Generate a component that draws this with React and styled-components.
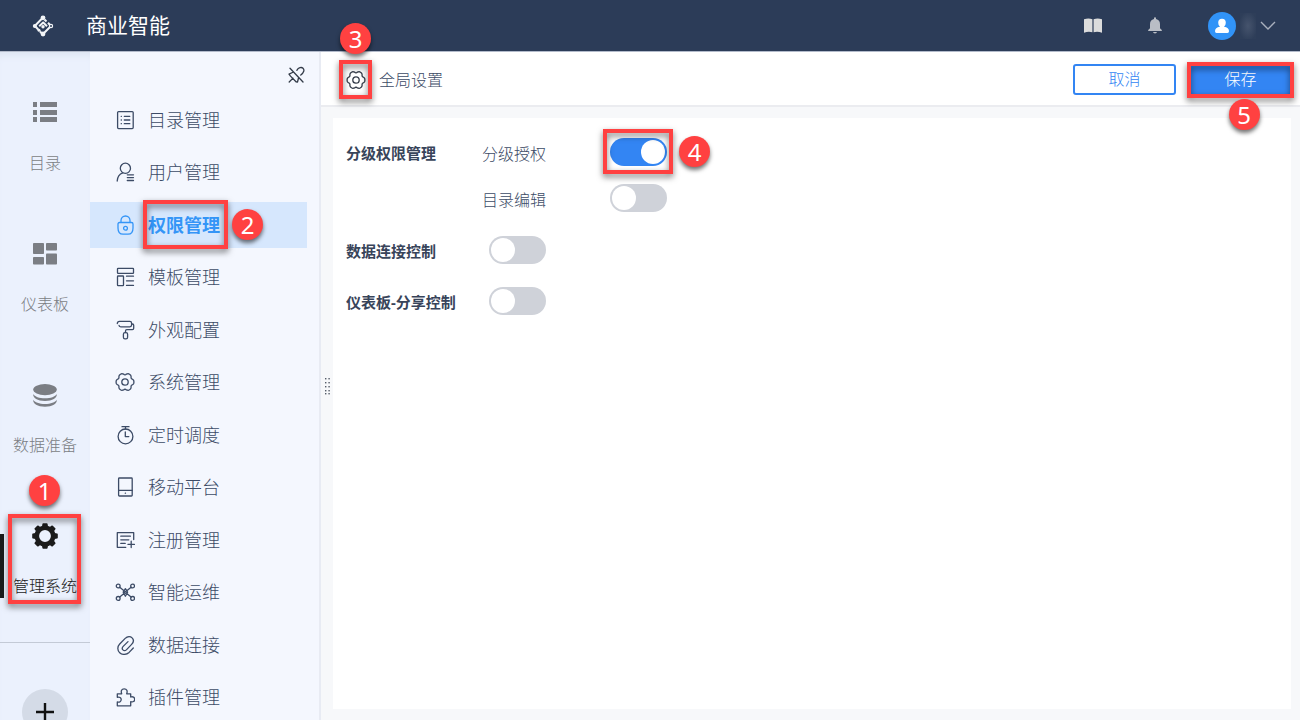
import React, { useState } from 'react'
import styled, { createGlobalStyle, css } from 'styled-components'

const GlobalStyle = createGlobalStyle`
    *, *::before, *::after {
        box-sizing: border-box;
    }
    body {
        margin: 0;
        color: #3c4b66;
        font-family: "Noto Sans", "Noto Sans CJK SC", sans-serif;
        font-size: 16px;
        font-weight: 300;
        line-height: 24px;
    }
    button, input {
        font: inherit;
    }
    a {
        color: inherit;
        text-decoration: none;
    }
`

const Page = styled.div`
    display: flex;
    flex-direction: column;
    height: 100vh;
    overflow: hidden;
`
const Header = styled.header`
    display: flex;
    align-items: center;
    flex-shrink: 0;
    gap: 32px;
    height: 52px;
    padding: 0 24px 0 32px;
    background: #2c3c58;
    border-bottom: 1px solid #b3bbcb;
`
const Title = styled.h1`
    margin: 0;
    padding-bottom: 2px;
    color: #fff;
    font-size: 21px;
    font-weight: 400;
    line-height: 28px;
`
const HeaderTools = styled.div`
    display: flex;
    align-items: center;
    gap: 44px;
    margin-left: auto;
`
const IconButton = styled.button`
    display: flex;
    align-items: center;
    gap: 4px;
    padding: 0;
    border: 0;
    background: none;
    color: ${props => props.$color || '#333b48'};
    cursor: pointer;
`
const Avatar = styled.span`
    display: flex;
    align-items: center;
    justify-content: center;
    width: 28px;
    height: 28px;
    border-radius: 50%;
    background: #3193f7;
    color: #fff;
`
const HiddenName = styled.span`
    width: 16px;
    height: 26px;
    background: radial-gradient(#46546d, #2e3e59 80%);
`
const Body = styled.div`
    display: flex;
    flex: 1;
    min-height: 0;
`

const Rail = styled.nav`
    display: flex;
    flex-direction: column;
    flex: 0 0 90px;
    padding-top: 47px;
    background: #ebf1fd;
    box-shadow: inset 0 8px 8px -6px #d9e1ef;
`
const RailList = styled.div`
    display: flex;
    flex-direction: column;
    gap: 65px;
`
const RailLink = styled.a`
    position: relative;
    display: flex;
    flex-direction: column;
    align-items: center;
    gap: 24px;
    color: ${props => (props.$active ? '#1b1b1b' : '#7b7e84')};
    ${props => props.$active && css`
        &::before {
            content: "";
            position: absolute;
            left: 0;
            bottom: 0;
            width: 4px;
            height: 64px;
            background: #1b1b1b;
        }
    `}
`
const RailLine = styled.hr`
    width: 100%;
    margin: 44px 0 46px;
    border: 0;
    border-top: 1px solid #c3cad6;
`
const AddButton = styled.button`
    display: flex;
    align-items: center;
    justify-content: center;
    align-self: center;
    flex-shrink: 0;
    width: 46px;
    height: 46px;
    padding: 0;
    border: 0;
    border-radius: 50%;
    background: #d4dbe7;
    color: #111;
`

const Side = styled.aside`
    display: flex;
    flex-direction: column;
    flex: 0 0 231px;
    background: #f4f7fe;
    border-right: 2px solid #e8ebf3;
`
const SideTop = styled.div`
    display: flex;
    align-items: center;
    justify-content: flex-end;
    height: 45px;
    padding-right: 14px;
`
const Menu = styled.nav`
    display: flex;
    flex-direction: column;
    justify-content: space-between;
    flex: 1;
    padding-right: 12px;
`
const MenuLink = styled.a`
    display: flex;
    align-items: center;
    gap: 13px;
    height: 46px;
    padding-left: 25px;
    color: ${props => (props.$active ? '#3495f7' : '#3c4b66')};
    background: ${props => (props.$active ? '#d6e7fd' : 'none')};
    font-size: 18px;
    font-weight: ${props => (props.$active ? 700 : 300)};
`

const Main = styled.main`
    position: relative;
    display: flex;
    flex-direction: column;
    flex: 1;
    min-width: 0;
    background: #f7f8fa;
`
const Toolbar = styled.div`
    display: flex;
    align-items: center;
    gap: 13px;
    height: 55px;
    padding: 2px 8px 0 25px;
    background: #fff;
    border-bottom: 2px solid #ebecf0;
`
const ToolbarTitle = styled.h2`
    margin: 0 auto 0 0;
    font-size: 16px;
    font-weight: 300;
`
const Button = styled.button`
    width: 103px;
    height: 31px;
    padding: 0 0 2px;
    border: 2px solid #3385f3;
    border-radius: 3px;
    background: ${props => (props.$primary ? '#3385f3' : '#fff')};
    color: ${props => (props.$primary ? '#fff' : '#3385f3')};
    cursor: pointer;
`
const Grip = styled.svg`
    position: absolute;
    top: 50%;
    left: 3px;
    margin-top: -9px;
`
const Workspace = styled.div`
    display: flex;
    flex: 1;
    padding: 11px 9px 11px 12px;
`
const Card = styled.section`
    display: flex;
    flex-direction: column;
    flex: 1;
    gap: 23px;
    padding: 20px 13px;
    background: #fff;
`
const Setting = styled.div`
    display: flex;
`
const SettingName = styled.div`
    flex: 0 0 ${props => (props.$wide ? 143 : 136)}px;
    padding-top: 3px;
    color: #38445a;
    font-size: 15px;
    font-weight: 700;
`
const Options = styled.div`
    display: flex;
    flex-direction: column;
    gap: 18px;
    padding-bottom: 1px;
`
const Option = styled.div`
    display: flex;
`
const OptionName = styled.label`
    width: 128px;
    padding-top: 4px;
`
const Toggle = styled.input`
    display: block;
    width: 57px;
    height: 28px;
    margin: 0;
    padding: 2px;
    appearance: none;
    border-radius: 14px;
    background: ${props => (props.checked ? '#3385f3' : '#cfd2d9')};
    cursor: pointer;
    &::before {
        content: "";
        display: block;
        width: 24px;
        height: 24px;
        margin-left: ${props => (props.checked ? '29px' : '0')};
        border-radius: 50%;
        background: #fff;
    }
`

// numbered guide marks that lie over the controls
const Anchor = styled.span`
    position: relative;
    display: block;
`
const Frame = styled.span`
    position: absolute;
    inset: ${props => props.$inset};
    border: 4px solid #ff4141;
    filter: drop-shadow(0 3px 3px rgba(0, 0, 0, 0.55));
    pointer-events: none;
`
const Badge = styled.span`
    position: absolute;
    ${props => props.$place}
    z-index: 1;
    width: 31px;
    height: 31px;
    border-radius: 50%;
    background: #ff4141;
    box-shadow: 0 3px 4px rgba(0, 0, 0, 0.55);
    color: #fff;
    font-size: 24px;
    font-weight: 400;
    line-height: 31px;
    text-align: center;
    pointer-events: none;
`
const above = css`
    left: 50%;
    bottom: 100%;
    margin: 0 0 16px -16px;
`
const below = css`
    left: 50%;
    top: 100%;
    margin: 4px 0 0 -12px;
`
const right = css`
    left: 100%;
    top: 50%;
    margin: -16px 0 0 12px;
`

const gearPath = () => {
    const points = []
    for (let i = 0; i < 72; i++) {
        const a = (i * Math.PI) / 36
        const r = 8.9 - 1.7 * Math.pow((1 - Math.cos(6 * a)) / 2, 2)
        points.push(`${(10 + r * Math.cos(a)).toFixed(2)} ${(10 + r * Math.sin(a)).toFixed(2)}`)
    }
    return `M${points.join('L')}Z`
}

const Line = ({ children, size = 20 }) => (
    <svg width={size} height={size} viewBox={`0 0 ${size} ${size}`} fill="none" stroke="currentColor"
        strokeWidth="1.3" strokeLinecap="round" strokeLinejoin="round" aria-hidden="true">
        {children}
    </svg>
)

const Gear = () => (
    <Line>
        <path d={gearPath()} />
        <circle cx="10" cy="10" r="3.2" />
    </Line>
)

const menuItems = [
    {
        name: '目录管理',
        icon: <Line><rect x="2.6" y="1.6" width="15.6" height="17" rx="1" /><path d="M6.2 6.3h.2M6.2 10h.2M6.2 13.7h.2M9.3 6.3h5.5M9.3 10h5.5M9.3 13.7h5.5" /></Line>
    },
    {
        name: '用户管理',
        icon: <Line><circle cx="10.4" cy="6.3" r="5.1" /><path d="M2.2 19c.2-4 2.2-7 5.6-8.2M12.3 12.8h6.2M12.3 15.6h6.2M12.3 18.5h6.2" /></Line>
    },
    {
        name: '权限管理',
        icon: <Line><path d="M6 7.5V5.5a4.5 4.5 0 0 1 9 0v2M4.5 7.5h12q1.500 0 1.500 1.500v4c0 4.300-2 6.200-5 6.200H8c-3 0-5-1.900-5-6.200V9q0-1.500 1.500-1.500z" /><circle cx="10.5" cy="13.2" r="1.9" /></Line>
    },
    {
        name: '模板管理',
        icon: <Line><rect x="2.5" y="1.3" width="16" height="5" rx=".6" /><rect x="2.5" y="9" width="6" height="9.6" rx=".6" /><path d="M11.5 9.2h7M11.5 13.8h7M11.5 18.4h7" /></Line>
    },
    {
        name: '外观配置',
        icon: <Line><path d="M2.3 3.6Q2.3 1.4 4.5 1.4h10.3q1.8 0 1.8 1.8V5q0 1.800-1.800 1.800h-9Q4 6.800 4 5.300M16.600 4h.8q1.300 0 1.300 1.300v3q0 1.300-1.300 1.300h-5.600q-1.300 0-1.300 1.300v1.600" /><rect x="8.4" y="12.6" width="4.2" height="6.2" rx="1.6" /></Line>
    },
    { name: '系统管理', icon: <Gear /> },
    {
        name: '定时调度',
        icon: <Line><circle cx="10.5" cy="11.4" r="7.4" /><path d="M7 1.7h7M10.5 1.700v2.200M10.300 7v4.600h3.500" /></Line>
    },
    {
        name: '移动平台',
        icon: <Line><rect x="3.6" y="1" width="13.6" height="18" rx=".8" /><path d="M3.6 13.3h13.600M10.300 16.200h.2" /></Line>
    },
    {
        name: '注册管理',
        icon: <Line><path d="M18.7 9.5V2.7H2.3v14.600h8.500M5.800 6.200h9.600M5.800 9.800h8M5.800 13.400h4.400M16.200 11.200v6.400M13 14.400h6.400" /></Line>
    },
    {
        name: '智能运维',
        icon: <Line><circle cx="3.2" cy="4" r="1.9" /><circle cx="17.6" cy="4" r="1.9" /><circle cx="3.2" cy="16.4" r="1.9" /><circle cx="17.6" cy="16.4" r="1.9" /><path d="M4.7 5.3l4 3.300M16.100 5.300l-4 3.300M4.700 15.100l4-3.300M16.100 15.100l-4-3.300M10.400 6.700l2.200 3.500-2.200 4-2.200-4z" /><circle cx="10.4" cy="10.3" r="1" /></Line>
    },
    {
        name: '数据连接',
        icon: <Line><path d="M18.3 13l-4.200 4.400c-3 2.600-7 2.600-9.400.3s-2.600-6 0-8.700l5.500-5.600c2.300-2.200 5.200-2.200 6.900-.5s1.600 4.300-.5 6.500l-5 5.200c-1.200 1.200-2.800 1.200-3.700.3s-.8-2.300.3-3.500l4.800-4.800" /></Line>
    },
    {
        name: '插件管理',
        icon: <Line><path d="M2.3 6.8h4.400c-1-2.500-.2-5 2.500-5s3.500 2.500 2.500 5h4V10c2.200-.8 4 .3 4 2.300s-1.800 3.100-4 2.300v4.200H2.300v-3.900c2.300.8 3.900-.5 3.900-2.300S4.600 9.500 2.300 10.300z" /></Line>
    }
]

const railItems = [
    {
        name: '目录',
        icon: <svg width="28" height="28" viewBox="0 0 28 28" fill="currentColor"><path d="M2 3h4v5H2zM9 3h17v5H9zM2 11h4v5H2zM9 11h17v5H9zM2 18h4v5H2zM9 18h17v5H9z" /></svg>
    },
    {
        name: '仪表板',
        icon: <svg width="28" height="28" viewBox="0 0 28 28" fill="currentColor"><rect x="2" y="3" width="11" height="11" rx=".8" /><rect x="2" y="17" width="11" height="7.5" rx=".8" /><rect x="15" y="3" width="11" height="7.5" rx=".8" /><rect x="15" y="13.5" width="11" height="11" rx=".8" /></svg>
    },
    {
        name: '数据准备',
        icon: <svg width="28" height="28" viewBox="0 0 28 28" fill="currentColor"><ellipse cx="14" cy="8.6" rx="11.8" ry="5.6" /><path d="M2.2 13c1.600 2.700 6 4.300 11.800 4.300S24.200 15.700 25.800 13c.4 4-4.400 7-11.800 7S1.800 17 2.200 13zM2.200 18.800c1.600 2.700 6 4.200 11.800 4.200s10.200-1.500 11.800-4.200c.4 4-4.400 6.900-11.800 6.900s-12.200-2.900-11.800-6.900z" /></svg>
    },
    {
        name: '管理系统',
        active: true,
        icon: (
            <svg width="28" height="28" viewBox="0 0 28 28" fill="none" stroke="currentColor">
                <circle cx="14" cy="14" r="8.2" strokeWidth="4.6" />
                {[0, 45, 90, 135, 180, 225, 270, 315].map(a => (
                    <path key={a} d="M10.8 5.5l.6-3.600q.1-.7.8-.7h3.600q.7 0 .8.700l.6 3.600z" fill="currentColor" stroke="none" transform={`rotate(${a} 14 14)`} />
                ))}
            </svg>
        )
    }
]

const Logo = () => (
    <svg width="22" height="22" viewBox="0 0 22 22" fill="none" stroke="#f2f4f7" strokeWidth="2" strokeLinejoin="round" aria-hidden="true">
        <path d="M10.5 3L3 10.700M3 11l3.200 3.500M8 16.500l2.500 2.500M12.500 4.500L14.500 6.500M16 7.800l3 3.200-7.500 7.500M7.200 11.300L11.200 7.500l3.800 3.800" />
        <g fill="#f2f4f7" stroke="none">
            <circle cx="11" cy="2.8" r="2.4" />
            <circle cx="2.8" cy="11" r="2" />
            <circle cx="11" cy="19" r="2.4" />
            <circle cx="11" cy="11.8" r="1.7" />
            <circle cx="7" cy="15.3" r="1.5" />
        </g>
        <circle cx="19" cy="11" r="1.6" strokeWidth="1.2" fill="#2c3c58" />
    </svg>
)

const App = () => {
    const [grading, setGrading] = useState(true)
    const [editing, setEditing] = useState(false)
    const [connection, setConnection] = useState(false)
    const [sharing, setSharing] = useState(false)

    return (
        <>
        <GlobalStyle />
        <Page>
            <Header>
                <Logo />
                <Title>商业智能</Title>
                <HeaderTools>
                    <IconButton $color="#dcdcdc" aria-label="帮助">
                        <svg width="18" height="18" viewBox="0 0 18 18" fill="currentColor"><path d="M0 2.300Q4.500.8 8.400 2.300v13Q4.500 14.200 0 15.700zM9.600 2.300Q13.500.8 18 2.300v13.400Q13.500 14.200 9.600 15.300z" /></svg>
                    </IconButton>
                    <IconButton $color="#b9bdc5" aria-label="消息">
                        <svg width="18" height="18" viewBox="0 0 18 18" fill="currentColor"><path d="M8 1.900V1q0-.8 1-.8t1 .8v.9q4 .9 4 5.300v4l1.800 1.800v.9H2.200V13L4 11.200v-4q0-4.400 4-5.300zM7 15h4q-.3 1.400-2 1.400T7 15z" /></svg>
                    </IconButton>
                    <IconButton $color="#a9b0bd" aria-label="用户">
                        <Avatar>
                            <svg width="16" height="16" viewBox="0 0 16 16" fill="currentColor"><path d="M8 .8q3.800 0 3.800 3.900 0 2.700-1.800 4.100 5 .6 5 4.400 0 1.800-1.500 1.800h-11Q1 15 1 13.200q0-3.800 5-4.400-1.800-1.400-1.800-4.100Q4.200.8 8 .8z" /></svg>
                        </Avatar>
                        <HiddenName />
                        <svg width="16" height="16" viewBox="0 0 16 16" fill="none" stroke="currentColor" strokeWidth="1.4"><path d="M1 4l7 7 7-7" /></svg>
                    </IconButton>
                </HeaderTools>
            </Header>
            <Body>
                <Rail>
                    <RailList>
                        {railItems.map(item => (
                            <RailLink key={item.name} href="#" $active={item.active}>
                                {item.icon}
                                {item.name}
                                {item.active && <><Frame $inset="-8px 9px -6px 8px" /><Badge $place={above}>1</Badge></>}
                            </RailLink>
                        ))}
                    </RailList>
                    <RailLine />
                    <AddButton aria-label="添加">
                        <svg width="18" height="18" viewBox="0 0 18 18" stroke="currentColor" strokeWidth="2.4"><path d="M0 9h18M9 0v18" /></svg>
                    </AddButton>
                </Rail>
                <Side>
                    <SideTop>
                        <IconButton aria-label="取消固定">
                            <Line size={18}>
                                <path d="M3 2.200l13 13.800M9.800 4.300C11.500 1.500 14.500.8 16 2.200c1.700 1.700 1 4.300-2.200 6.800M6.500 6L2 8.100l1.500 2 5.500 5.700 1.500.2 1-4M6 12.100L2.200 16" />
                            </Line>
                        </IconButton>
                    </SideTop>
                    <Menu>
                        {menuItems.map(item => {
                            const active = item.name === '权限管理'
                            return (
                                <MenuLink key={item.name} href="#" $active={active}>
                                    {item.icon}
                                    <Anchor>
                                        {item.name}
                                        {active && <><Frame $inset="-13px -8px -12px -5px" /><Badge $place={right}>2</Badge></>}
                                    </Anchor>
                                </MenuLink>
                            )
                        })}
                    </Menu>
                </Side>
                <Main>
                    <Toolbar>
                        <Anchor>
                            <IconButton aria-label="设置"><Gear /></IconButton>
                            <Frame $inset="-10px -6px -9px -7px" />
                            <Badge $place={above}>3</Badge>
                        </Anchor>
                        <ToolbarTitle>全局设置</ToolbarTitle>
                        <Button>取消</Button>
                        <Anchor>
                            <Button $primary>保存</Button>
                            <Frame $inset="-2px -2px -3px -2px" />
                            <Badge $place={below}>5</Badge>
                        </Anchor>
                    </Toolbar>
                    <Grip width="6" height="18" fill="#555c69">
                        {[1, 5, 9, 13, 16].map(y => (
                            <React.Fragment key={y}>
                                <rect x="1" y={y} width="1.4" height="1.4" />
                                <rect x="4.4" y={y} width="1.4" height="1.4" />
                            </React.Fragment>
                        ))}
                    </Grip>
                    <Workspace>
                        <Card>
                            <Setting>
                                <SettingName>分级权限管理</SettingName>
                                <Options>
                                    <Option>
                                        <OptionName htmlFor="grading">分级授权</OptionName>
                                        <Anchor>
                                            <Toggle id="grading" type="checkbox" checked={grading} onChange={() => setGrading(!grading)} />
                                            <Frame $inset="-9px -6px -8px -7px" />
                                            <Badge $place={right}>4</Badge>
                                        </Anchor>
                                    </Option>
                                    <Option>
                                        <OptionName htmlFor="editing">目录编辑</OptionName>
                                        <Toggle id="editing" type="checkbox" checked={editing} onChange={() => setEditing(!editing)} />
                                    </Option>
                                </Options>
                            </Setting>
                            <Setting>
                                <SettingName as="label" htmlFor="connection" $wide>数据连接控制</SettingName>
                                <Toggle id="connection" type="checkbox" checked={connection} onChange={() => setConnection(!connection)} />
                            </Setting>
                            <Setting>
                                <SettingName as="label" htmlFor="sharing" $wide>仪表板-分享控制</SettingName>
                                <Toggle id="sharing" type="checkbox" checked={sharing} onChange={() => setSharing(!sharing)} />
                            </Setting>
                        </Card>
                    </Workspace>
                </Main>
            </Body>
        </Page>
        </>
    )
}

export default App
